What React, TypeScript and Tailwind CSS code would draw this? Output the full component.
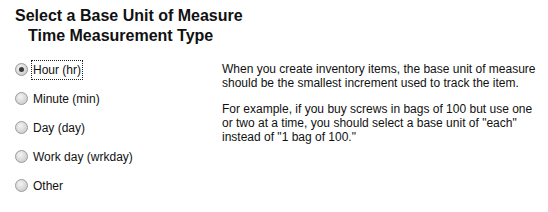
import React from "react";

const options = [
  { key: "hr", label: "Hour (hr)" },
  { key: "min", label: "Minute (min)" },
  { key: "day", label: "Day (day)" },
  { key: "wrkday", label: "Work day (wrkday)" },
  { key: "other", label: "Other" },
];

const Radio: React.FC<{ checked: boolean }> = ({ checked }) => (
  <span className="relative flex h-[13px] w-[13px] shrink-0 items-center justify-center rounded-full border border-[#9a9a9a] bg-[radial-gradient(circle_at_40%_35%,#f4f4f4_0%,#d6d6d6_60%,#c4c4c4_100%)]">
    {checked && <span className="h-[5px] w-[5px] rounded-full bg-[#3a3a3a]" />}
  </span>
);

export default function App() {
  const selected = "hr";

  return (
    <div className="h-[212px] w-[548px] bg-white font-['Liberation_Sans',Arial,sans-serif] text-[#111]">
      <div className="pl-[15px] pt-[6px]">
        <h1 className="text-[16px] font-bold leading-[20px] text-[#111]">
          Select a Base Unit of Measure
        </h1>
        <h2 className="pl-[13px] text-[16px] font-bold leading-[20px] text-[#111]">
          Time Measurement Type
        </h2>
      </div>

      <div className="mt-[9px] flex">
        <div className="w-[222px] pl-[15px]">
          {options.map((o) => (
            <label
              key={o.key}
              className="flex h-[29px] items-center gap-[3px] text-[12px] leading-[14px]"
            >
              <Radio checked={selected === o.key} />
              <span
                className={`px-[1px] py-[2px] ${
                  selected === o.key
                    ? "border border-dotted border-[#222]"
                    : "border border-transparent"
                }`}
              >
                {o.label}
              </span>
            </label>
          ))}
        </div>

        <div className="w-[318px] pt-[7px] text-[12px] leading-[14px] text-[#111]">
          <p>
            When you create inventory items, the base unit of measure should be
            the smallest increment used to track the item.
          </p>
          <p className="mt-[12px]">
            For example, if you buy screws in bags of 100 but use one or two at a
            time, you should select a base unit of "each" instead of "1 bag of
            100."
          </p>
        </div>
      </div>
    </div>
  );
}
